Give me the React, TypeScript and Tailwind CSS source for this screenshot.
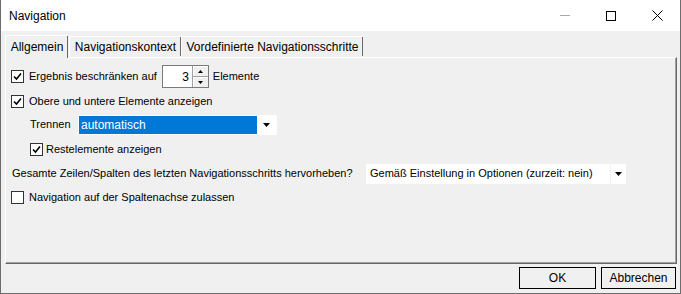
import React from "react";

const font = { fontFamily: '"Liberation Sans", Arial, sans-serif' };

function CheckBox({ checked }: { checked: boolean }) {
  return (
    <div className="w-[13px] h-[13px] border border-[#333333] bg-white flex items-center justify-center shrink-0">
      {checked && (
        <svg width="9" height="9" viewBox="0 0 9 9">
          <path d="M1 4.5 L3.5 7 L8 1.5" fill="none" stroke="#000" strokeWidth="1.6" />
        </svg>
      )}
    </div>
  );
}

function Arrow({ up = false }: { up?: boolean }) {
  return (
    <svg width="5" height="3" viewBox="0 0 5 3">
      <path d={up ? "M0 3 L5 3 L2.5 0 Z" : "M0 0 L5 0 L2.5 3 Z"} fill="#000" />
    </svg>
  );
}

function DropArrow() {
  return (
    <svg width="7" height="4" viewBox="0 0 7 4">
      <path d="M0 0 L7 0 L3.5 4 Z" fill="#000" />
    </svg>
  );
}

export default function App() {
  return (
    <div
      className="w-[681px] h-[294px] bg-[#f0f0f0] border-x border-b border-[#6d6d6d] flex flex-col text-black overflow-hidden"
      style={font}
    >
      {/* Title bar */}
      <div className="h-[31px] bg-white flex items-center shrink-0">
        <span className="pl-[8px] text-[12px] flex-1">Navigation</span>
        <div className="w-[46px] h-full flex items-center justify-center">
          <div className="w-[10px] h-px bg-[#a8a8a8]" />
        </div>
        <div className="w-[46px] h-full flex items-center justify-center">
          <div className="w-[10px] h-[10px] border border-black" />
        </div>
        <div className="w-[46px] h-full flex items-center justify-center">
          <svg width="11" height="11" viewBox="0 0 11 11">
            <path d="M0.5 0.5 L10.5 10.5 M10.5 0.5 L0.5 10.5" stroke="#000" strokeWidth="1" />
          </svg>
        </div>
      </div>

      {/* Body */}
      <div className="flex-1 flex flex-col pl-[4px] pr-[3px]">
        {/* Tabs */}
        <div className="h-[26px] flex items-end text-[12px] relative z-10">
          <div className="h-[23px] w-[63px] bg-[#f0f0f0] border-l border-t border-white shadow-[inset_-1px_0_0_#696969] flex items-center justify-center -mb-px">
            Allgemein
          </div>
          <div className="h-[20px] w-[112px] ml-[1px] border-l border-t border-white shadow-[inset_-1px_0_0_#696969] flex items-center justify-center mb-px">
            Navigationskontext
          </div>
          <div className="h-[20px] w-[182px] border-l border-t border-white shadow-[inset_-1px_0_0_#696969] flex items-center justify-center mb-px">
            Vordefinierte Navigationsschritte
          </div>
        </div>

        {/* Panel */}
        <div className="h-[207px] border-l border-t border-white border-r border-b border-r-[#696969] border-b-[#696969] shadow-[inset_-1px_-1px_0_#a0a0a0] flex flex-col pt-[7px] text-[11px]">
          <div className="h-[23px] flex items-center pl-[5px]">
            <CheckBox checked />
            <span className="ml-[5px]">Ergebnis beschränken auf</span>
            <div className="ml-[5px] w-[47px] h-[23px] border border-[#7a7a7a] bg-white flex items-stretch">
              <span className="flex-1 text-right pr-[3px] self-center text-[12px]">3</span>
              <div className="w-[16px] flex flex-col border-l border-[#a0a0a0] bg-[#e9e9e9]">
                <div className="flex-1 flex items-center justify-center border-b border-[#a0a0a0] bg-[#f0f0f0] shadow-[inset_1px_1px_0_#fff]">
                  <Arrow up />
                </div>
                <div className="flex-1 flex items-center justify-center bg-[#f0f0f0] shadow-[inset_1px_1px_0_#fff]">
                  <Arrow />
                </div>
              </div>
            </div>
            <span className="ml-[4px]">Elemente</span>
          </div>

          <div className="h-[26px] flex items-center pl-[5px]">
            <CheckBox checked />
            <span className="ml-[5px]">Obere und untere Elemente anzeigen</span>
          </div>

          <div className="h-[21px] flex items-center pl-[24px]">
            <span className="w-[48px]">Trennen</span>
            <div className="w-[199px] h-[20px] bg-white flex p-px">
              <div className="w-[178px] bg-[#0078d7] text-white flex items-center pl-[2px] text-[12px]">
                automatisch
              </div>
              <div className="flex-1 flex items-center justify-center">
                <DropArrow />
              </div>
            </div>
          </div>

          <div className="h-[28px] flex items-center pl-[24px]">
            <CheckBox checked />
            <span className="ml-[3px]">Restelemente anzeigen</span>
          </div>

          <div className="h-[21px] flex items-center pl-[6px]">
            <span className="w-[354px]">Gesamte Zeilen/Spalten des letzten Navigationsschritts hervorheben?</span>
            <div className="w-[260px] h-[20px] bg-white flex items-center">
              <span className="flex-1 pl-[4px]">Gemäß Einstellung in Optionen (zurzeit: nein)</span>
              <div className="w-[16px] h-[18px] border-l border-[#f0f0f0] flex items-center justify-center">
                <DropArrow />
              </div>
            </div>
          </div>

          <div className="h-[26px] flex items-center pl-[5px]">
            <CheckBox checked={false} />
            <span className="ml-[5px]">Navigation auf der Spaltenachse zulassen</span>
          </div>
        </div>

        {/* Buttons */}
        <div className="flex justify-end gap-[5px] pt-[3px] text-[12px] relative">
          <button className="w-[77px] h-[22px] border border-[#000] bg-[#f0f0f0]">OK</button>
          <button className="w-[75px] h-[22px] border border-[#000] bg-[#f0f0f0] mr-[1px]">Abbrechen</button>
          <svg className="absolute right-[-3px] bottom-[-21px]" width="11" height="11" viewBox="0 0 11 11">
            <g fill="#9a9a9a">
              <rect x="8" y="2" width="2" height="2" />
              <rect x="5" y="5" width="2" height="2" />
              <rect x="8" y="5" width="2" height="2" />
              <rect x="2" y="8" width="2" height="2" />
              <rect x="5" y="8" width="2" height="2" />
              <rect x="8" y="8" width="2" height="2" />
            </g>
          </svg>
        </div>
      </div>
    </div>
  );
}
